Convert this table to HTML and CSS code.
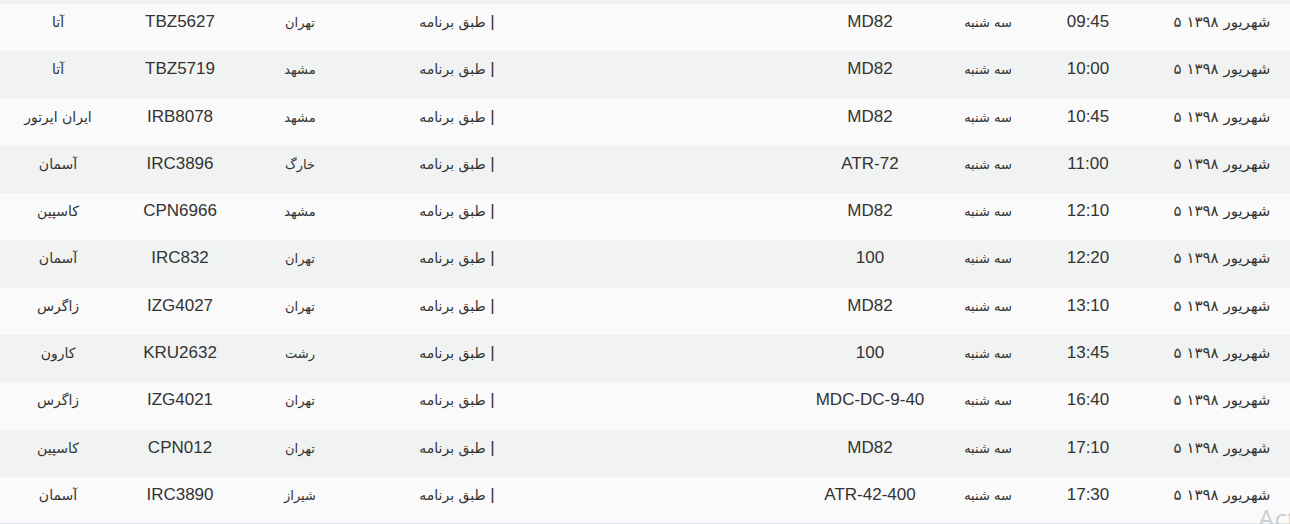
FILE: index.html
```html
<!DOCTYPE html>
<html lang="fa">
<head>
<meta charset="utf-8">
<title>پروازها</title>
<link rel="stylesheet" href="styles.css">
</head>
<body>
<div class="table" dir="rtl">
  <div class="row row-partial"></div>
  <div class="row">
    <div class="cell"><span class="fa fa-date">شهریور ۱۳۹۸ ۵</span></div>
    <div class="cell">09:45</div>
    <div class="cell"><span class="fa">سه شنبه</span></div>
    <div class="cell">MD82</div>
    <div class="cell"></div>
    <div class="cell">| <span class="fa fa-lg">طبق برنامه</span></div>
    <div class="cell"><span class="fa">تهران</span></div>
    <div class="cell">TBZ5627</div>
    <div class="cell"><span class="fa fa-lg">آتا</span></div>
  </div>
  <div class="row">
    <div class="cell"><span class="fa fa-date">شهریور ۱۳۹۸ ۵</span></div>
    <div class="cell">10:00</div>
    <div class="cell"><span class="fa">سه شنبه</span></div>
    <div class="cell">MD82</div>
    <div class="cell"></div>
    <div class="cell">| <span class="fa fa-lg">طبق برنامه</span></div>
    <div class="cell"><span class="fa">مشهد</span></div>
    <div class="cell">TBZ5719</div>
    <div class="cell"><span class="fa fa-lg">آتا</span></div>
  </div>
  <div class="row">
    <div class="cell"><span class="fa fa-date">شهریور ۱۳۹۸ ۵</span></div>
    <div class="cell">10:45</div>
    <div class="cell"><span class="fa">سه شنبه</span></div>
    <div class="cell">MD82</div>
    <div class="cell"></div>
    <div class="cell">| <span class="fa fa-lg">طبق برنامه</span></div>
    <div class="cell"><span class="fa">مشهد</span></div>
    <div class="cell">IRB8078</div>
    <div class="cell"><span class="fa fa-lg">ایران ایرتور</span></div>
  </div>
  <div class="row">
    <div class="cell"><span class="fa fa-date">شهریور ۱۳۹۸ ۵</span></div>
    <div class="cell">11:00</div>
    <div class="cell"><span class="fa">سه شنبه</span></div>
    <div class="cell">ATR-72</div>
    <div class="cell"></div>
    <div class="cell">| <span class="fa fa-lg">طبق برنامه</span></div>
    <div class="cell"><span class="fa">خارگ</span></div>
    <div class="cell">IRC3896</div>
    <div class="cell"><span class="fa fa-lg">آسمان</span></div>
  </div>
  <div class="row">
    <div class="cell"><span class="fa fa-date">شهریور ۱۳۹۸ ۵</span></div>
    <div class="cell">12:10</div>
    <div class="cell"><span class="fa">سه شنبه</span></div>
    <div class="cell">MD82</div>
    <div class="cell"></div>
    <div class="cell">| <span class="fa fa-lg">طبق برنامه</span></div>
    <div class="cell"><span class="fa">مشهد</span></div>
    <div class="cell">CPN6966</div>
    <div class="cell"><span class="fa fa-lg">کاسپین</span></div>
  </div>
  <div class="row">
    <div class="cell"><span class="fa fa-date">شهریور ۱۳۹۸ ۵</span></div>
    <div class="cell">12:20</div>
    <div class="cell"><span class="fa">سه شنبه</span></div>
    <div class="cell">100</div>
    <div class="cell"></div>
    <div class="cell">| <span class="fa fa-lg">طبق برنامه</span></div>
    <div class="cell"><span class="fa">تهران</span></div>
    <div class="cell">IRC832</div>
    <div class="cell"><span class="fa fa-lg">آسمان</span></div>
  </div>
  <div class="row">
    <div class="cell"><span class="fa fa-date">شهریور ۱۳۹۸ ۵</span></div>
    <div class="cell">13:10</div>
    <div class="cell"><span class="fa">سه شنبه</span></div>
    <div class="cell">MD82</div>
    <div class="cell"></div>
    <div class="cell">| <span class="fa fa-lg">طبق برنامه</span></div>
    <div class="cell"><span class="fa">تهران</span></div>
    <div class="cell">IZG4027</div>
    <div class="cell"><span class="fa fa-lg">زاگرس</span></div>
  </div>
  <div class="row">
    <div class="cell"><span class="fa fa-date">شهریور ۱۳۹۸ ۵</span></div>
    <div class="cell">13:45</div>
    <div class="cell"><span class="fa">سه شنبه</span></div>
    <div class="cell">100</div>
    <div class="cell"></div>
    <div class="cell">| <span class="fa fa-lg">طبق برنامه</span></div>
    <div class="cell"><span class="fa">رشت</span></div>
    <div class="cell">KRU2632</div>
    <div class="cell"><span class="fa fa-lg">کارون</span></div>
  </div>
  <div class="row">
    <div class="cell"><span class="fa fa-date">شهریور ۱۳۹۸ ۵</span></div>
    <div class="cell">16:40</div>
    <div class="cell"><span class="fa">سه شنبه</span></div>
    <div class="cell">MDC-DC-9-40</div>
    <div class="cell"></div>
    <div class="cell">| <span class="fa fa-lg">طبق برنامه</span></div>
    <div class="cell"><span class="fa">تهران</span></div>
    <div class="cell">IZG4021</div>
    <div class="cell"><span class="fa fa-lg">زاگرس</span></div>
  </div>
  <div class="row">
    <div class="cell"><span class="fa fa-date">شهریور ۱۳۹۸ ۵</span></div>
    <div class="cell">17:10</div>
    <div class="cell"><span class="fa">سه شنبه</span></div>
    <div class="cell">MD82</div>
    <div class="cell"></div>
    <div class="cell">| <span class="fa fa-lg">طبق برنامه</span></div>
    <div class="cell"><span class="fa">تهران</span></div>
    <div class="cell">CPN012</div>
    <div class="cell"><span class="fa fa-lg">کاسپین</span></div>
  </div>
  <div class="row row-last">
    <div class="cell"><span class="fa fa-date">شهریور ۱۳۹۸ ۵</span></div>
    <div class="cell">17:30</div>
    <div class="cell"><span class="fa">سه شنبه</span></div>
    <div class="cell">ATR-42-400</div>
    <div class="cell"></div>
    <div class="cell">| <span class="fa fa-lg">طبق برنامه</span></div>
    <div class="cell"><span class="fa">شیراز</span></div>
    <div class="cell">IRC3890</div>
    <div class="cell"><span class="fa fa-lg">آسمان</span></div>
  </div>
</div>
<div class="watermark" dir="ltr">Activate Windows</div>
</body>
</html>
```

FILE: styles.css
```css
html, body {
  margin: 0;
  padding: 0;
}

body {
  background: #fafafa;
  width: 1290px;
  height: 524px;
  overflow: hidden;
  position: relative;
  font-family: "Liberation Sans", Arial, "DejaVu Sans", sans-serif;
  font-size: 17px;
  color: #333;
}

.table {
  display: flex;
  flex-direction: column;
  border-bottom: 1px solid #dfe6ea;
}

.row {
  display: grid;
  grid-template-columns: 136px 132px 68px 168px 228px 202px 112px 128px 116px;
  height: 47.3px;
  background: #fafafa;
}

.row:nth-child(odd) {
  background: #f1f3f3;
}

.row-partial {
  height: 4px;
}

.row-last {
  height: 46px;
}

.cell {
  text-align: center;
  padding-top: 8px;
  line-height: 20px;
  white-space: nowrap;
}

.fa {
  font-family: "DejaVu Sans", sans-serif;
  font-size: 13px;
}

.fa-lg {
  font-size: 14px;
}

.fa-date {
  font-size: 15px;
}

.watermark {
  position: absolute;
  left: 1258px;
  top: 500px;
  font-family: "Open Sans", "Liberation Sans", sans-serif;
  font-size: 26px;
  color: rgba(150, 150, 150, 0.45);
  white-space: nowrap;
}
```
